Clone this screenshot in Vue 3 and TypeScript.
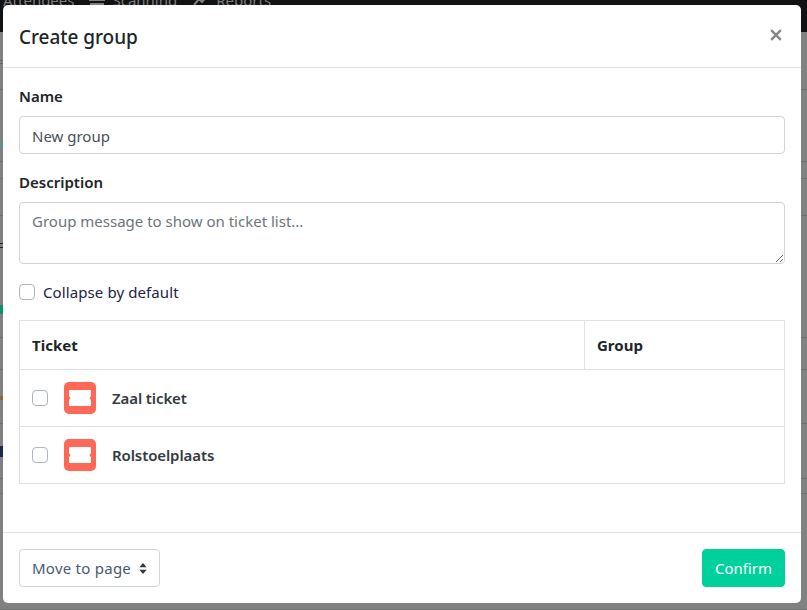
<script setup lang="ts">
const tickets = ['Zaal ticket', 'Rolstoelplaats']
const backRows = [58, 72, 17, 37, 122, 32, 54, 55, 15, 116]
const backMarks = [
  { y: 60, h: 1, c: '#666' },
  { y: 63, h: 1, c: '#666' },
  { y: 142, h: 6, c: '#5f8f93' },
  { y: 243, h: 1, c: '#222' },
  { y: 247, h: 1, c: '#222' },
  { y: 305, h: 9, c: '#0f8f6c' },
  { y: 396, h: 4, c: '#8a6a3a' },
  { y: 446, h: 11, c: '#1c2a4a' }
]
</script>

<template>
  <div class="page">
    <div class="backdrop">
      <nav class="topnav">
        <span class="navitem">Attendees</span>
        <span class="navitem second"><svg class="navicon" viewBox="0 0 16 12"><path d="M0 5h16v2H0zM1 0h14v3H1zM1 9h14v3H1z" fill="#7c7e80" /></svg>Scanning</span>
        <span class="navitem third"><svg class="navicon" viewBox="0 0 16 12"><path d="M1 11l5-6 3 3 6-7" fill="none" stroke="#7c7e80" stroke-width="2" /></svg>Reports</span>
      </nav>
      <div class="backrows">
        <div v-for="(h, i) in backRows" :key="i" class="backrow" :style="{ height: h + 'px' }"></div>
      </div>
      <i v-for="(m, i) in backMarks" :key="'m' + i" class="mark" :style="{ top: m.y + 'px', height: m.h + 'px', background: m.c }"></i>
    </div>
    <div class="modal">
      <header class="modal-header">
        <h5 class="title">Create group</h5>
        <svg class="close" viewBox="0 0 12 12" aria-label="Close"><path d="M1.2 1.2l9.6 9.6M10.8 1.2l-9.6 9.6" stroke="#868686" stroke-width="2.4" fill="none" /></svg>
      </header>
      <div class="modal-body">
        <div class="field">
          <label class="label">Name</label>
          <input class="control" type="text" value="New group" />
        </div>
        <div class="field">
          <label class="label">Description</label>
          <textarea class="control area" placeholder="Group message to show on ticket list..."></textarea>
        </div>
        <label class="check-row">
          <input class="check" type="checkbox" />
          <span>Collapse by default</span>
        </label>
        <table class="table">
          <thead>
            <tr>
              <th class="col-ticket">Ticket</th>
              <th class="col-group">Group</th>
            </tr>
          </thead>
          <tbody>
            <tr v-for="t in tickets" :key="t">
              <td class="ticket-cell">
                <div class="ticket">
                  <input class="check" type="checkbox" />
                  <span class="icon">
                    <svg viewBox="0 0 22 16" width="22" height="16"><path d="M.5 0h21a.5.5 0 0 1 .5.5v5.7a1.9 1.9 0 0 0 0 3.6v5.7a.5.5 0 0 1-.5.5H.5a.5.5 0 0 1-.5-.5V9.8a1.9 1.9 0 0 0 0-3.6V.5A.5.5 0 0 1 .5 0z" fill="#fff" /></svg>
                  </span>
                  <span class="ticket-name">{{ t }}</span>
                </div>
              </td>
              <td></td>
            </tr>
          </tbody>
        </table>
      </div>
      <footer class="modal-footer">
        <button class="move" type="button"><span class="move-text">Move to page</span>
          <svg class="caret" viewBox="0 0 8 12" width="8" height="11"><path d="M4 0l4 4.6H0zM4 12L0 7.4h8z" fill="#343a40" /></svg>
        </button>
        <button class="confirm" type="button">Confirm</button>
      </footer>
    </div>
  </div>
</template>

<style>
html, body { margin: 0; padding: 0; background: #7d7e7e; }
</style>

<style scoped>
.page {
  position: relative;
  width: 807px;
  height: 610px;
  overflow: hidden;
  background: #808181;
  font-family: "Noto Sans", "Open Sans", sans-serif;
  font-size: 15px;
  color: #212529;
}
.backdrop { height: 610px; }
.topnav {
  display: flex;
  height: 32px;
  overflow: hidden;
  background: #111213;
  padding-left: 3px;
  color: #7c7e80;
  line-height: 1;
  font-size: 15px;
}
.navitem { display: flex; align-items: center; gap: 7px; margin-top: -8px; height: 16px; }
.second { margin-left: 15px; }
.third { margin-left: 16px; }
.navicon { width: 16px; height: 12px; }
.backrows { display: flex; flex-direction: column; }
.backrow { flex: none; box-sizing: border-box; border-bottom: 1px solid #6f7171; }
.mark { position: absolute; left: 0; width: 3px; }
.modal {
  position: absolute;
  top: 5px;
  left: 3px;
  width: 798px;
  height: 598px;
  box-sizing: border-box;
  background: #fff;
  border-radius: 5px;
  display: flex;
  flex-direction: column;
}
.modal-header {
  height: 63px;
  box-sizing: border-box;
  display: flex;
  align-items: center;
  justify-content: space-between;
  padding: 1px 19px 0 16px;
  border-bottom: 1px solid #dee2e6;
}
.title { margin: 0; font-size: 19px; font-weight: 500; color: #212529; letter-spacing: -0.05px; }
.close { width: 12px; height: 12px; margin-top: -3px; }
.modal-body { flex: 1; padding: 16px 16px 0; }
.field { margin-bottom: 16px; }
.label { display: block; font-weight: 600; font-size: 15px; line-height: 24px; margin-bottom: 8px; }
.control {
  display: block;
  width: 100%;
  height: 38px;
  box-sizing: border-box;
  padding: 7px 12px 5px;
  border: 1px solid #ced4da;
  border-radius: 4px;
  font: inherit;
  color: #495057;
  background: #fff;
  outline: none;
}
.area { height: 62px; resize: vertical; padding-top: 8px; }
.area::placeholder { color: #6c757d; opacity: 1; }
.check-row {
  display: flex;
  align-items: center;
  gap: 8px;
  height: 24px;
  color: #212349;
  margin-bottom: 16px;
  letter-spacing: 0.1px;
}
.check {
  appearance: none;
  width: 16px;
  height: 16px;
  margin: 0;
  box-sizing: border-box;
  border: 1px solid #adb5bd;
  border-radius: 4px;
  background: #fff;
  flex: none;
}
.table {
  width: 100%;
  border-collapse: collapse;
  table-layout: fixed;
}
th, td { border: 1px solid #dee2e6; padding: 0 12px; text-align: left; }
tbody td { border-left: none; border-right: none; }
tbody td:first-child { border-left: 1px solid #dee2e6; }
tbody td:last-child { border-right: 1px solid #dee2e6; }
thead tr { height: 49px; }
tbody tr { height: 57px; }
th { font-weight: 700; color: #212529; }
.col-group { width: 175px; }
.ticket { display: flex; align-items: center; }
.icon {
  width: 32px;
  height: 32px;
  margin-left: 16px;
  margin-right: 16px;
  border-radius: 5px;
  background: #ff6757;
  display: flex;
  align-items: center;
  justify-content: center;
}
.icon svg { display: block; }
.ticket-name { font-weight: 600; color: #343a40; letter-spacing: -0.1px; }
.modal-footer {
  height: 71px;
  box-sizing: border-box;
  display: flex;
  justify-content: space-between;
  align-items: center;
  padding: 0 16px;
  border-top: 1px solid #dee2e6;
}
.move, .confirm {
  height: 38px;
  box-sizing: border-box;
  border-radius: 4px;
  font: inherit;
}
.move {
  display: flex;
  align-items: center;
  gap: 8px;
  padding: 0 12px;
  border: 1px solid #ced4da;
  background: #fff;
  color: #495a75;
}
.move-text { letter-spacing: 0.25px; }
.confirm { width: 83px; padding: 0; border: 1px solid #00d09c; background: #00d09c; color: #fff; }
</style>
